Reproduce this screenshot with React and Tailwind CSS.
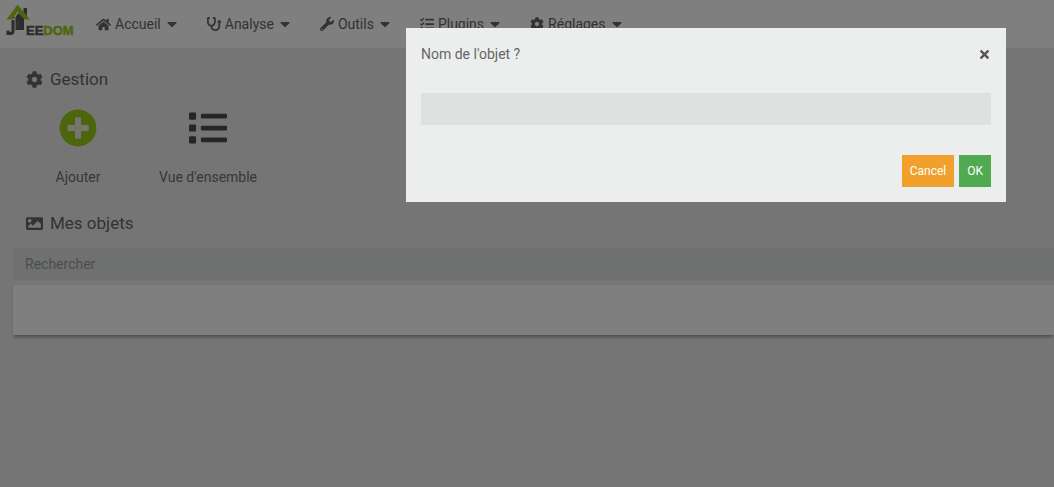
import { FaHome, FaStethoscope, FaWrench, FaTasks, FaCog, FaCaretDown, FaPlusCircle, FaList, FaImage, FaTimes } from "react-icons/fa";

const menu = [
  { label: "Accueil", Icon: FaHome, size: "size-[15px]" },
  { label: "Analyse", Icon: FaStethoscope, size: "size-3.5" },
  { label: "Outils", Icon: FaWrench, size: "size-3.5" },
  { label: "Plugins", Icon: FaTasks, size: "size-3.5" },
  { label: "Réglages", Icon: FaCog, size: "size-3.5" },
];

function Logo() {
  return (
    <a href="#" aria-label="Jeedom" className="flex w-20 shrink-0">
      <svg width="80" height="40" viewBox="0 0 80 40">
        <path d="M15.500 17 L18.500 13 L24 18 V30 H15.500 Z" fill="#58595b" />
        <path d="M23.500 8 H27 V16.500 L23.500 12.500 Z" fill="#58595b" />
        <path d="M11.500 16.500 H14.500 V18.500 H11.500 Z" fill="#58595b" />
        <path d="M13 20 V31 Q13 33.500 10.500 33.500 H8 V30.500" fill="none" stroke="#58595b" strokeWidth="3" />
        <path d="M18 21 V27" stroke="#77787a" strokeWidth="1" />
        <path d="M6.500 19.500 L17.500 4.500 L30 19.500 H24.500 L17.800 11.500 L12 19.500 Z" fill="#9acd16" />
        <text x="26" y="35" className="font-['Liberation_Sans',sans-serif] text-[13px] font-bold">
          <tspan fill="#58595b" stroke="#58595b" strokeWidth="0.500">EE</tspan>
          <tspan fill="#9acd16" stroke="#9acd16" strokeWidth="0.500">DOM</tspan>
        </text>
      </svg>
    </a>
  );
}

export default function App() {
  return (
    <div className="min-h-screen bg-[#ebebeb] font-[Roboto,sans-serif] text-sm text-[#666]">
      <header className="flex h-12 items-start bg-white">
        <Logo />
        <nav className="flex h-12 items-center gap-[27px] pl-4">
          {menu.map(({ label, Icon, size }) => (
            <button key={label} type="button" className="flex items-center">
              <Icon className={`mr-1 ${size}`} />
              <span>{label}</span>
              <FaCaretDown className="ml-[3px] size-4" />
            </button>
          ))}
        </nav>
      </header>

      <main className="pl-[13px]">
        <h1 className="flex h-[61px] items-center gap-[7px] pt-px pl-[13px] text-[17px]">
          <FaCog className="size-[17px]" />
          Gestion
        </h1>
        <div className="flex h-[95px] items-start text-[#707070]">
          <button type="button" className="flex w-[130px] flex-col items-center">
            <FaPlusCircle className="size-[38px] text-[#9acd16]" />
            <span className="mt-5">Ajouter</span>
          </button>
          <button type="button" className="flex w-[130px] flex-col items-center">
            <FaList className="size-[38px] text-[#4c4c4c]" />
            <span className="mt-5">Vue d'ensemble</span>
          </button>
        </div>
        <h2 className="flex h-[38px] items-center gap-[7px] pl-[13px] text-[17px]">
          <FaImage className="size-[17px]" />
          Mes objets
        </h2>
        <input aria-label="Rechercher" placeholder="Rechercher" className="mt-1.5 block h-8 w-full bg-[#dfe2e1] px-3 placeholder:text-[#999]" />
        <div className="mt-[5px] h-[50px] bg-white shadow-[0_3px_3px_-1px_rgba(0,0,0,0.35)]" />
      </main>

      <div className="fixed inset-0 flex items-start justify-end bg-black/50 pt-7 pr-12">
        <form role="dialog" aria-modal="true" aria-labelledby="dialog-label" className="w-[600px] max-w-full bg-[#eceeed] p-[15px]">
          <div className="flex h-[22px] items-center justify-between">
            <label id="dialog-label" htmlFor="object-name">Nom de l'objet ?</label>
            <button type="button" aria-label="Fermer" className="text-[#555]">
              <FaTimes className="size-[13px]" />
            </button>
          </div>
          <input id="object-name" className="mt-7 block h-8 w-full bg-[#dfe1e0] px-3" />
          <div className="mt-[30px] flex justify-end gap-[5px] text-xs text-white">
            <button type="button" className="h-8 bg-[#f0a02b] px-2">Cancel</button>
            <button type="submit" className="h-8 bg-[#50aa50] px-2">OK</button>
          </div>
        </form>
      </div>
    </div>
  );
}
